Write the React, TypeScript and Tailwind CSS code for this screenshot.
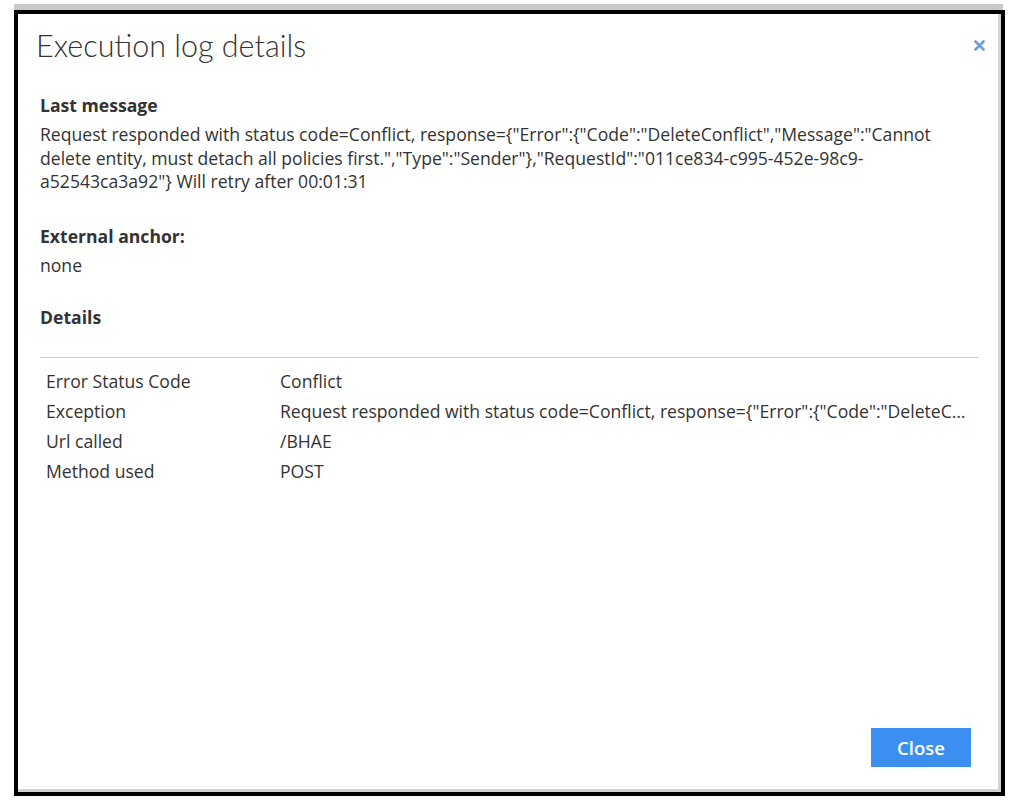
import React from 'react'

const rows = [
  { label: 'Error Status Code', value: 'Conflict' },
  {
    label: 'Exception',
    value:
      'Request responded with status code=Conflict, response={"Error":{"Code":"DeleteConflict","Message":"Cannot delete entity, must detach all policies first.","Type":"Sender"},"RequestId":"011ce834-c995-452e-98c9-a52543ca3a92"}',
  },
  { label: 'Url called', value: '/BHAE' },
  { label: 'Method used', value: 'POST' },
]

export default function App() {
  return (
    <div className="min-h-screen bg-white pl-[14px] pt-[4px]" style={{ fontFamily: '"Open Sans", "Liberation Sans", sans-serif' }}>
      <div className="w-[989px] h-[6px] bg-[#c9c9c9]" />
      <div className="w-[991px] h-[786px] border-4 border-black bg-white shadow-[inset_-3px_-3px_0_#d4d4d4] flex flex-col">
        {/* Header */}
        <div className="flex items-start justify-between pt-[11px] pl-[18px] pr-[16px]">
          <h1 className="text-[30.5px] leading-[40px] font-light text-[#333]" style={{ fontFamily: 'Lato, "Open Sans", sans-serif' }}>
            Execution log details
          </h1>
          <button className="mt-[15px] text-[#6a9fd8]" aria-label="Close">
            <svg width="11" height="11" viewBox="0 0 11 11">
              <path d="M1.5 1.5 L9.5 9.5 M9.5 1.5 L1.5 9.5" stroke="currentColor" strokeWidth="2.6" strokeLinecap="round" />
            </svg>
          </button>
        </div>

        {/* Body */}
        <div className="flex-1 flex flex-col px-[22px] text-[17.6px] text-[#333]">
          <h3 className="mt-[28px] font-bold leading-[24px]">Last message</h3>
          <p className="mt-[6px] leading-[23.5px]">
            Request responded with status code=Conflict, response={'{"Error":{"Code":"DeleteConflict","Message":"Cannot delete entity, must detach all policies first.","Type":"Sender"},"RequestId":"011ce834-c995-452e-98c9-a52543ca3a92"}'} Will retry after 00:01:31
          </p>

          <h3 className="mt-[30px] font-bold leading-[24px]">External anchor:</h3>
          <p className="mt-[5px] leading-[24px]">none</p>

          <h3 className="mt-[28px] font-bold leading-[24px]">Details</h3>
          <div className="mt-[28px] border-t border-[#cccccc] pt-[8px]">
            {rows.map(r => (
              <div key={r.label} className="grid grid-cols-[234px_minmax(0,1fr)] leading-[30px]">
                <div className="px-[6px] whitespace-nowrap">{r.label}</div>
                <div className="pl-[6px] pr-[12px] truncate">{r.value}</div>
              </div>
            ))}
          </div>

          <div className="flex-1" />
          <div className="flex justify-end pr-[8px] pb-[25px]">
            <button className="w-[100px] h-[39px] bg-[#3b8ff0] text-white text-[18.5px] font-semibold">Close</button>
          </div>
        </div>
      </div>
    </div>
  )
}
